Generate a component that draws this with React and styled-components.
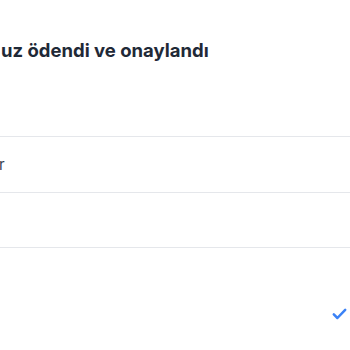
import React from 'react'
import styled, { createGlobalStyle } from 'styled-components'

const Global = createGlobalStyle`
  html, body {
    margin: 0;
    background: #ffffff;
    font-family: Inter, "Noto Sans", sans-serif;
  }
`

const Page = styled.main`
  width: 350px;
  height: 350px;
  overflow: hidden;
  padding-top: 36px;
  box-sizing: border-box;
`

const Title = styled.h1`
  margin: 0 0 0 1px;
  font-size: 18.5px;
  line-height: 28px;
  font-weight: 700;
  color: #1f2937;
  white-space: nowrap;
`

const List = styled.div`
  margin-top: 72px;
`

const Row = styled.div`
  height: ${(p) => p.h || 55}px;
  border-top: 1px solid #e5e7eb;
  display: flex;
  align-items: center;
`

const Label = styled.span`
  font-size: 15px;
  color: #374151;
  margin-left: -1px;
`

const Check = () => (
  <svg width="15" height="12" viewBox="0 0 15 12" fill="none">
    <path d="M1.8 6.4l3.6 3.6 7.8-8.2" stroke="#3b82f6" strokeWidth="2.5" strokeLinecap="round" strokeLinejoin="round" />
  </svg>
)

const CheckRow = styled.div`
  border-top: 1px solid #e5e7eb;
  height: 100px;
  display: flex;
  justify-content: flex-end;
  align-items: flex-start;
  padding: 60px 3px 0 0;
  box-sizing: border-box;
`

export default function App() {
  return (
    <>
      <Global />
      <Page>
        <Title>uz ödendi ve onaylandı</Title>
        <List>
          <Row>
            <Label>r</Label>
          </Row>
          <Row h={54} />
          <CheckRow>
            <Check />
          </CheckRow>
        </List>
      </Page>
    </>
  )
}
